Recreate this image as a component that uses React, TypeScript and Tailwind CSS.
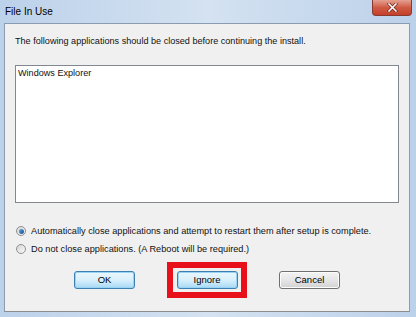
import { useState } from 'react';

const FONT = { fontFamily: '"Liberation Sans", Arial, sans-serif' };

function WinButton({ label, focused }: { label: string; focused?: boolean }) {
  return (
    <button
      className={`w-[61px] h-[18px] rounded-[3px] border text-[9.5px] leading-none text-black flex items-center justify-center ${
        focused
          ? 'border-[#3c7fb1] bg-gradient-to-b from-[#eaf6fd] via-[#d9f0fc] to-[#a7d9f5] shadow-[inset_0_0_0_1px_#9ad4f5]'
          : 'border-[#707070] bg-gradient-to-b from-[#f4f4f4] via-[#e6e6e6] to-[#d2d2d2] shadow-[inset_0_0_0_1px_#fcfcfc]'
      }`}
      style={FONT}
    >
      {label}
    </button>
  );
}

function Radio({ checked, label, onClick }: { checked: boolean; label: string; onClick: () => void }) {
  return (
    <div className="h-[18px] flex items-center gap-[5px] pl-[1px] cursor-default" onClick={onClick}>
      <div className="w-[10px] h-[10px] rounded-full border border-[#8f9090] bg-gradient-to-br from-[#d4d4d4] to-[#fbfbfb] flex items-center justify-center shrink-0">
        {checked && <div className="w-[5px] h-[5px] rounded-full bg-gradient-to-br from-[#5aa5e0] to-[#1b4f8c]" />}
      </div>
      <span className="text-[9.2px] leading-[12px] text-[#111]">{label}</span>
    </div>
  );
}

export default function App() {
  const [autoClose, setAutoClose] = useState(true);

  return (
    <div
      className="w-[416px] h-[317px] flex flex-col bg-gradient-to-r from-[#bcd1ea] via-[#d4e2f1] to-[#bcd1ea] overflow-hidden"
      style={FONT}
    >
      {/* title bar */}
      <div className="h-[23px] flex items-start justify-between pl-[5px] pr-[4px]">
        <span className="mt-[5px] text-[10px] leading-[13px] text-black">File In Use</span>
        <div className="w-[40px] h-[16px] rounded-b-[4px] border border-t-0 border-[#8a3a30] bg-gradient-to-b from-[#e5a091] via-[#cf5a44] to-[#c4402a] flex items-center justify-center">
          <svg width="11" height="9" viewBox="0 0 11 9">
            <path d="M2 1 L9 8 M9 1 L2 8" stroke="#6b2218" strokeWidth="3" strokeLinecap="square" />
            <path d="M2 1 L9 8 M9 1 L2 8" stroke="#ffffff" strokeWidth="1.6" strokeLinecap="square" />
          </svg>
        </div>
      </div>

      {/* client area */}
      <div className="flex-1 ml-[4px] mr-[6px] mb-[5px] border border-[#8b9bb0] border-b-[#8c8c8c] bg-[#f0f0f0] flex flex-col px-[10px]">
        <p className="mt-[11px] text-[9.1px] leading-[12px] text-[#111]">
          The following applications should be closed before continuing the install.
        </p>

        <div className="mt-[18px] h-[138px] border border-[#828790] bg-white">
          <div className="pl-[2px] pt-[1px] text-[9.1px] leading-[12px] text-[#111]">Windows Explorer</div>
        </div>

        <div className="mt-[19px] flex flex-col">
          <Radio
            checked={autoClose}
            onClick={() => setAutoClose(true)}
            label="Automatically close applications and attempt to restart them after setup is complete."
          />
          <Radio
            checked={!autoClose}
            onClick={() => setAutoClose(false)}
            label="Do not close applications. (A Reboot will be required.)"
          />
        </div>

        <div className="mt-[4px] flex items-center justify-center gap-[32px]">
          <WinButton label="OK" focused />
          <div className="w-[80px] h-[36px] border-[6px] border-[#e8111b] flex items-center justify-center">
            <WinButton label="Ignore" focused />
          </div>
          <WinButton label="Cancel" />
        </div>
      </div>
    </div>
  );
}
